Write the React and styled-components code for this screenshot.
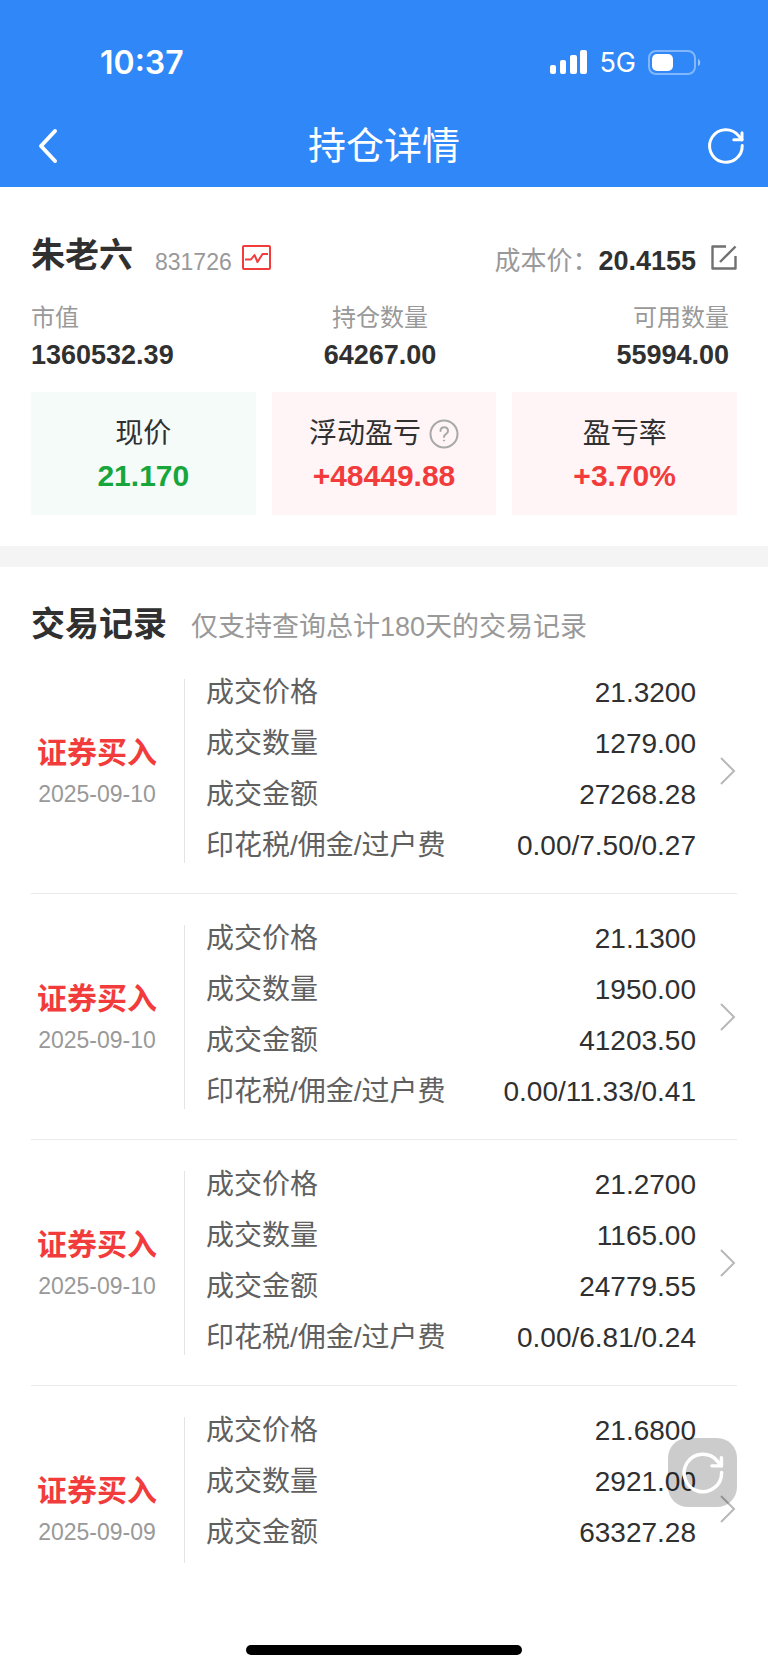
import React from "react";
import styled, {createGlobalStyle} from "styled-components";

const records = [
  {
    type: "证券买入",
    date: "2025-09-10",
    fields: [
      ["成交价格", "21.3200"],
      ["成交数量", "1279.00"],
      ["成交金额", "27268.28"],
      ["印花税/佣金/过户费", "0.00/7.50/0.27"],
    ],
  },
  {
    type: "证券买入",
    date: "2025-09-10",
    fields: [
      ["成交价格", "21.1300"],
      ["成交数量", "1950.00"],
      ["成交金额", "41203.50"],
      ["印花税/佣金/过户费", "0.00/11.33/0.41"],
    ],
  },
  {
    type: "证券买入",
    date: "2025-09-10",
    fields: [
      ["成交价格", "21.2700"],
      ["成交数量", "1165.00"],
      ["成交金额", "24779.55"],
      ["印花税/佣金/过户费", "0.00/6.81/0.24"],
    ],
  },
  {
    type: "证券买入",
    date: "2025-09-09",
    fields: [
      ["成交价格", "21.6800"],
      ["成交数量", "2921.00"],
      ["成交金额", "63327.28"],
    ],
  },
];

const RefreshIcon = ({size}) => (
  <svg width={size} height={size} viewBox='0 0 40 40' fill='none' stroke='#fff' strokeWidth='3' strokeLinecap='round' strokeLinejoin='round'>
    <path d='M36.2 19.5A16.3 16.3 0 1 1 32.5 9.6L36 13.8' />
    <path d='M36 6.7v7.1h-8.2' />
  </svg>
);

const App = () => {
  return (
    <Screen>
      <GlobalStyle />
      <Header>
        <StatusBar>
          <Clock>10:37</Clock>
          <StatusIcons>
            <svg width='37' height='24' viewBox='0 0 37 24' fill='#fff'>
              <rect x='0' y='15' width='6' height='9' rx='2' />
              <rect x='10' y='10' width='6' height='14' rx='2' />
              <rect x='20' y='5' width='7' height='19' rx='2' />
              <rect x='30' y='0' width='7' height='24' rx='2' />
            </svg>
            <Network>5G</Network>
            <svg width='53' height='25' viewBox='0 0 53 25' fill='none'>
              <rect x='1' y='1' width='46' height='23' rx='7' stroke='#fff' strokeOpacity='0.4' strokeWidth='2' />
              <rect x='4' y='4' width='21' height='17' rx='5' fill='#fff' />
              <path d='M50 9c3 1 3 6 0 7z' fill='#fff' fillOpacity='0.5' />
            </svg>
          </StatusIcons>
        </StatusBar>
        <NavBar>
          <IconButton aria-label='返回'>
            <svg width='20' height='36' viewBox='0 0 20 36' fill='none' stroke='#fff' strokeWidth='4' strokeLinecap='round' strokeLinejoin='round'>
              <path d='M17 3L3 18l14 15' />
            </svg>
          </IconButton>
          <NavTitle>持仓详情</NavTitle>
          <RefreshButton aria-label='刷新'>
            <RefreshIcon size={40} />
          </RefreshButton>
        </NavBar>
      </Header>

      <Summary>
        <StockRow>
          <StockName>朱老六</StockName>
          <StockCode>831726</StockCode>
          <RowButton aria-label='行情'>
            <svg width='29' height='25' viewBox='0 0 29 25' fill='none' stroke='#f23c3c' strokeWidth='2' strokeLinejoin='round'>
              <rect x='1' y='1' width='27' height='23' rx='1' />
              <path d='M3 14.5h6l3.5-4.5 3 7 5-8H26' />
            </svg>
          </RowButton>
          <CostLabel>成本价：</CostLabel>
          <CostValue>20.4155</CostValue>
          <RowButton aria-label='修改成本价'>
            <svg width='26' height='25' viewBox='0 0 26 25' fill='none' stroke='#707070' strokeWidth='2.4' strokeLinejoin='round'>
              <path d='M15 1.5H1.5v22h23V11' />
              <path d='M9 17L24.5 1.5' />
            </svg>
          </RowButton>
        </StockRow>

        <Stats>
          <Stat $align='left'>
            <dt>市值</dt>
            <dd>1360532.39</dd>
          </Stat>
          <Stat $align='center'>
            <dt>持仓数量</dt>
            <dd>64267.00</dd>
          </Stat>
          <Stat $align='right'>
            <dt>可用数量</dt>
            <dd>55994.00</dd>
          </Stat>
        </Stats>

        <Cards>
          <Card $bg='#f5fbf8' $color='#17a63c'>
            <CardLabel>现价</CardLabel>
            <CardValue>21.170</CardValue>
          </Card>
          <Card $bg='#fff5f6' $color='#f23c3c'>
            <CardLabel>
              浮动盈亏
              <IconButton aria-label='说明'>
                <svg width='30' height='30' viewBox='0 0 30 30' fill='none' stroke='#a8a8a8' strokeWidth='2' strokeLinecap='round'>
                  <circle cx='15' cy='15' r='13.5' />
                  <path d='M11.5 12c0-5 7.5-5 7.5 0 0 3-4 3-4 6' />
                  <circle cx='15' cy='21.5' r='0.6' fill='#a8a8a8' strokeWidth='1' />
                </svg>
              </IconButton>
            </CardLabel>
            <CardValue>+48449.88</CardValue>
          </Card>
          <Card $bg='#fff5f6' $color='#f23c3c'>
            <CardLabel>盈亏率</CardLabel>
            <CardValue>+3.70%</CardValue>
          </Card>
        </Cards>
      </Summary>

      <History>
        <HistoryHead>
          <h2>交易记录</h2>
          <p>仅支持查询总计180天的交易记录</p>
        </HistoryHead>
        <RecordList>
          {records.map((record, id) => (
            <Record key={id}>
              <RecordType>
                <strong>{record.type}</strong>
                <time>{record.date}</time>
              </RecordType>
              <Fields>
                {record.fields.map(([label, value]) => (
                  <Field key={label}>
                    <dt>{label}</dt>
                    <dd>{value}</dd>
                  </Field>
                ))}
              </Fields>
              <IconButton aria-label='查看详情'>
                <svg width='17' height='28' viewBox='0 0 17 28' fill='none' stroke='#b8b8b8' strokeWidth='2'>
                  <path d='M1 1l13 13L1 27' />
                </svg>
              </IconButton>
            </Record>
          ))}
        </RecordList>
      </History>

      <HomeArea>
        <HomeBar />
      </HomeArea>
      <FloatButton aria-label='刷新记录'>
        <RefreshIcon size={46} />
      </FloatButton>
    </Screen>
  );
};

const GlobalStyle = createGlobalStyle`
  * {
    box-sizing: border-box;
    margin: 0;
    padding: 0;
  }
  body {
    background-color: #fff;
    color: #303030;
    font-family: "Liberation Sans", "Noto Sans CJK SC", sans-serif;
  }
`;

const Screen = styled.div`
  height: 100vh;
  display: flex;
  flex-direction: column;
`;

const IconButton = styled.button`
  display: flex;
  flex-shrink: 0;
  border: none;
  background: none;
  cursor: pointer;
`;

const RefreshButton = styled(IconButton)`
  justify-self: end;
`;

const RowButton = styled(IconButton)`
  padding-bottom: 9px;
`;

const Header = styled.header`
  flex-shrink: 0;
  background-color: #2f87f8;
  color: #fff;
`;

const StatusBar = styled.div`
  height: 104px;
  padding: 20px 67px 0 100px;
  display: flex;
  align-items: center;
  justify-content: space-between;
  font-family: Inter, sans-serif;
`;

const Clock = styled.span`
  font-size: 32px;
  font-weight: 600;
`;

const StatusIcons = styled.div`
  display: flex;
  align-items: center;
  gap: 12px;
`;

const Network = styled.span`
  font-size: 27px;
`;

const NavBar = styled.nav`
  height: 83px;
  padding: 0 22px 0 38px;
  display: grid;
  grid-template-columns: 40px 1fr 56px;
  align-items: center;
`;

const NavTitle = styled.h1`
  font-size: 38px;
  font-weight: 400;
  line-height: 48px;
  text-align: center;
`;

const Summary = styled.section`
  flex-shrink: 0;
  padding: 44px 31px 31px;
  border-bottom: 21px solid #f4f4f4;
`;

const StockRow = styled.div`
  height: 48px;
  display: flex;
  align-items: flex-end;
  line-height: 36px;
`;

const StockName = styled.h2`
  font-size: 34px;
  line-height: 48px;
  margin-right: 22px;
`;

const StockCode = styled.span`
  font-size: 23px;
  line-height: 34px;
  color: #999;
  margin-right: 10px;
`;

const CostLabel = styled.span`
  font-size: 26px;
  color: #999;
  margin-left: auto;
`;

const CostValue = styled.strong`
  font-size: 27px;
  margin-right: 15px;
`;

const Stats = styled.dl`
  display: grid;
  grid-template-columns: repeat(3, 1fr);
  padding: 21px 8px 18px 0;
`;

const Stat = styled.div`
  text-align: ${(props) => props.$align};

  dt {
    font-size: 24px;
    line-height: 36px;
    color: #999;
  }
  dd {
    font-size: 27px;
    font-weight: 700;
    line-height: 38px;
  }
`;

const Cards = styled.div`
  display: grid;
  grid-template-columns: repeat(3, 1fr);
  gap: 16px;
`;

const Card = styled.div`
  padding: 24px 0 19px;
  display: flex;
  flex-direction: column;
  align-items: center;
  gap: 4px;
  background-color: ${(props) => props.$bg};
  color: ${(props) => props.$color};
`;

const CardLabel = styled.div`
  display: flex;
  align-items: center;
  gap: 8px;
  font-size: 28px;
  line-height: 36px;
  color: #303030;
`;

const CardValue = styled.strong`
  font-size: 30px;
  line-height: 40px;
`;

const History = styled.section`
  flex: 1;
  min-height: 0;
  overflow: hidden;
  padding: 33px 31px 0;
`;

const HistoryHead = styled.div`
  height: 48px;
  display: flex;
  align-items: baseline;
  gap: 24px;
  line-height: 48px;

  h2 {
    font-size: 34px;
  }
  p {
    font-size: 27px;
    color: #999;
  }
`;

const RecordList = styled.ul`
  list-style: none;
`;

const Record = styled.li`
  height: 246px;
  padding: 31px 0 30px;
  display: flex;
  align-items: center;
  border-bottom: 1px solid #ebebeb;
`;

const RecordType = styled.div`
  align-self: stretch;
  width: 154px;
  padding: 4px 21px 0 0;
  display: flex;
  flex-direction: column;
  justify-content: center;
  align-items: center;
  border-right: 1px solid #e4e4e4;

  strong {
    font-size: 30px;
    line-height: 42px;
    color: #f23c3c;
  }
  time {
    font-size: 23px;
    line-height: 40px;
    color: #999;
  }
`;

const Fields = styled.dl`
  flex: 1;
  height: 208px;
  padding: 0 24px 0 21px;
`;

const Field = styled.div`
  display: flex;
  justify-content: space-between;
  font-size: 28px;
  line-height: 51px;

  dt {
    color: #606060;
  }
`;

const HomeArea = styled.footer`
  flex-shrink: 0;
  height: 107px;
  padding-bottom: 15px;
  display: flex;
  align-items: flex-end;
  justify-content: center;
`;

const HomeBar = styled.div`
  width: 36%;
  height: 10px;
  border-radius: 5px;
  background-color: #000;
`;

const FloatButton = styled.button`
  position: fixed;
  right: 31px;
  bottom: 163px;
  width: 69px;
  height: 69px;
  display: flex;
  align-items: center;
  justify-content: center;
  border: none;
  border-radius: 20px;
  background-color: rgba(0, 0, 0, 0.2);
  cursor: pointer;
`;

export default App;
